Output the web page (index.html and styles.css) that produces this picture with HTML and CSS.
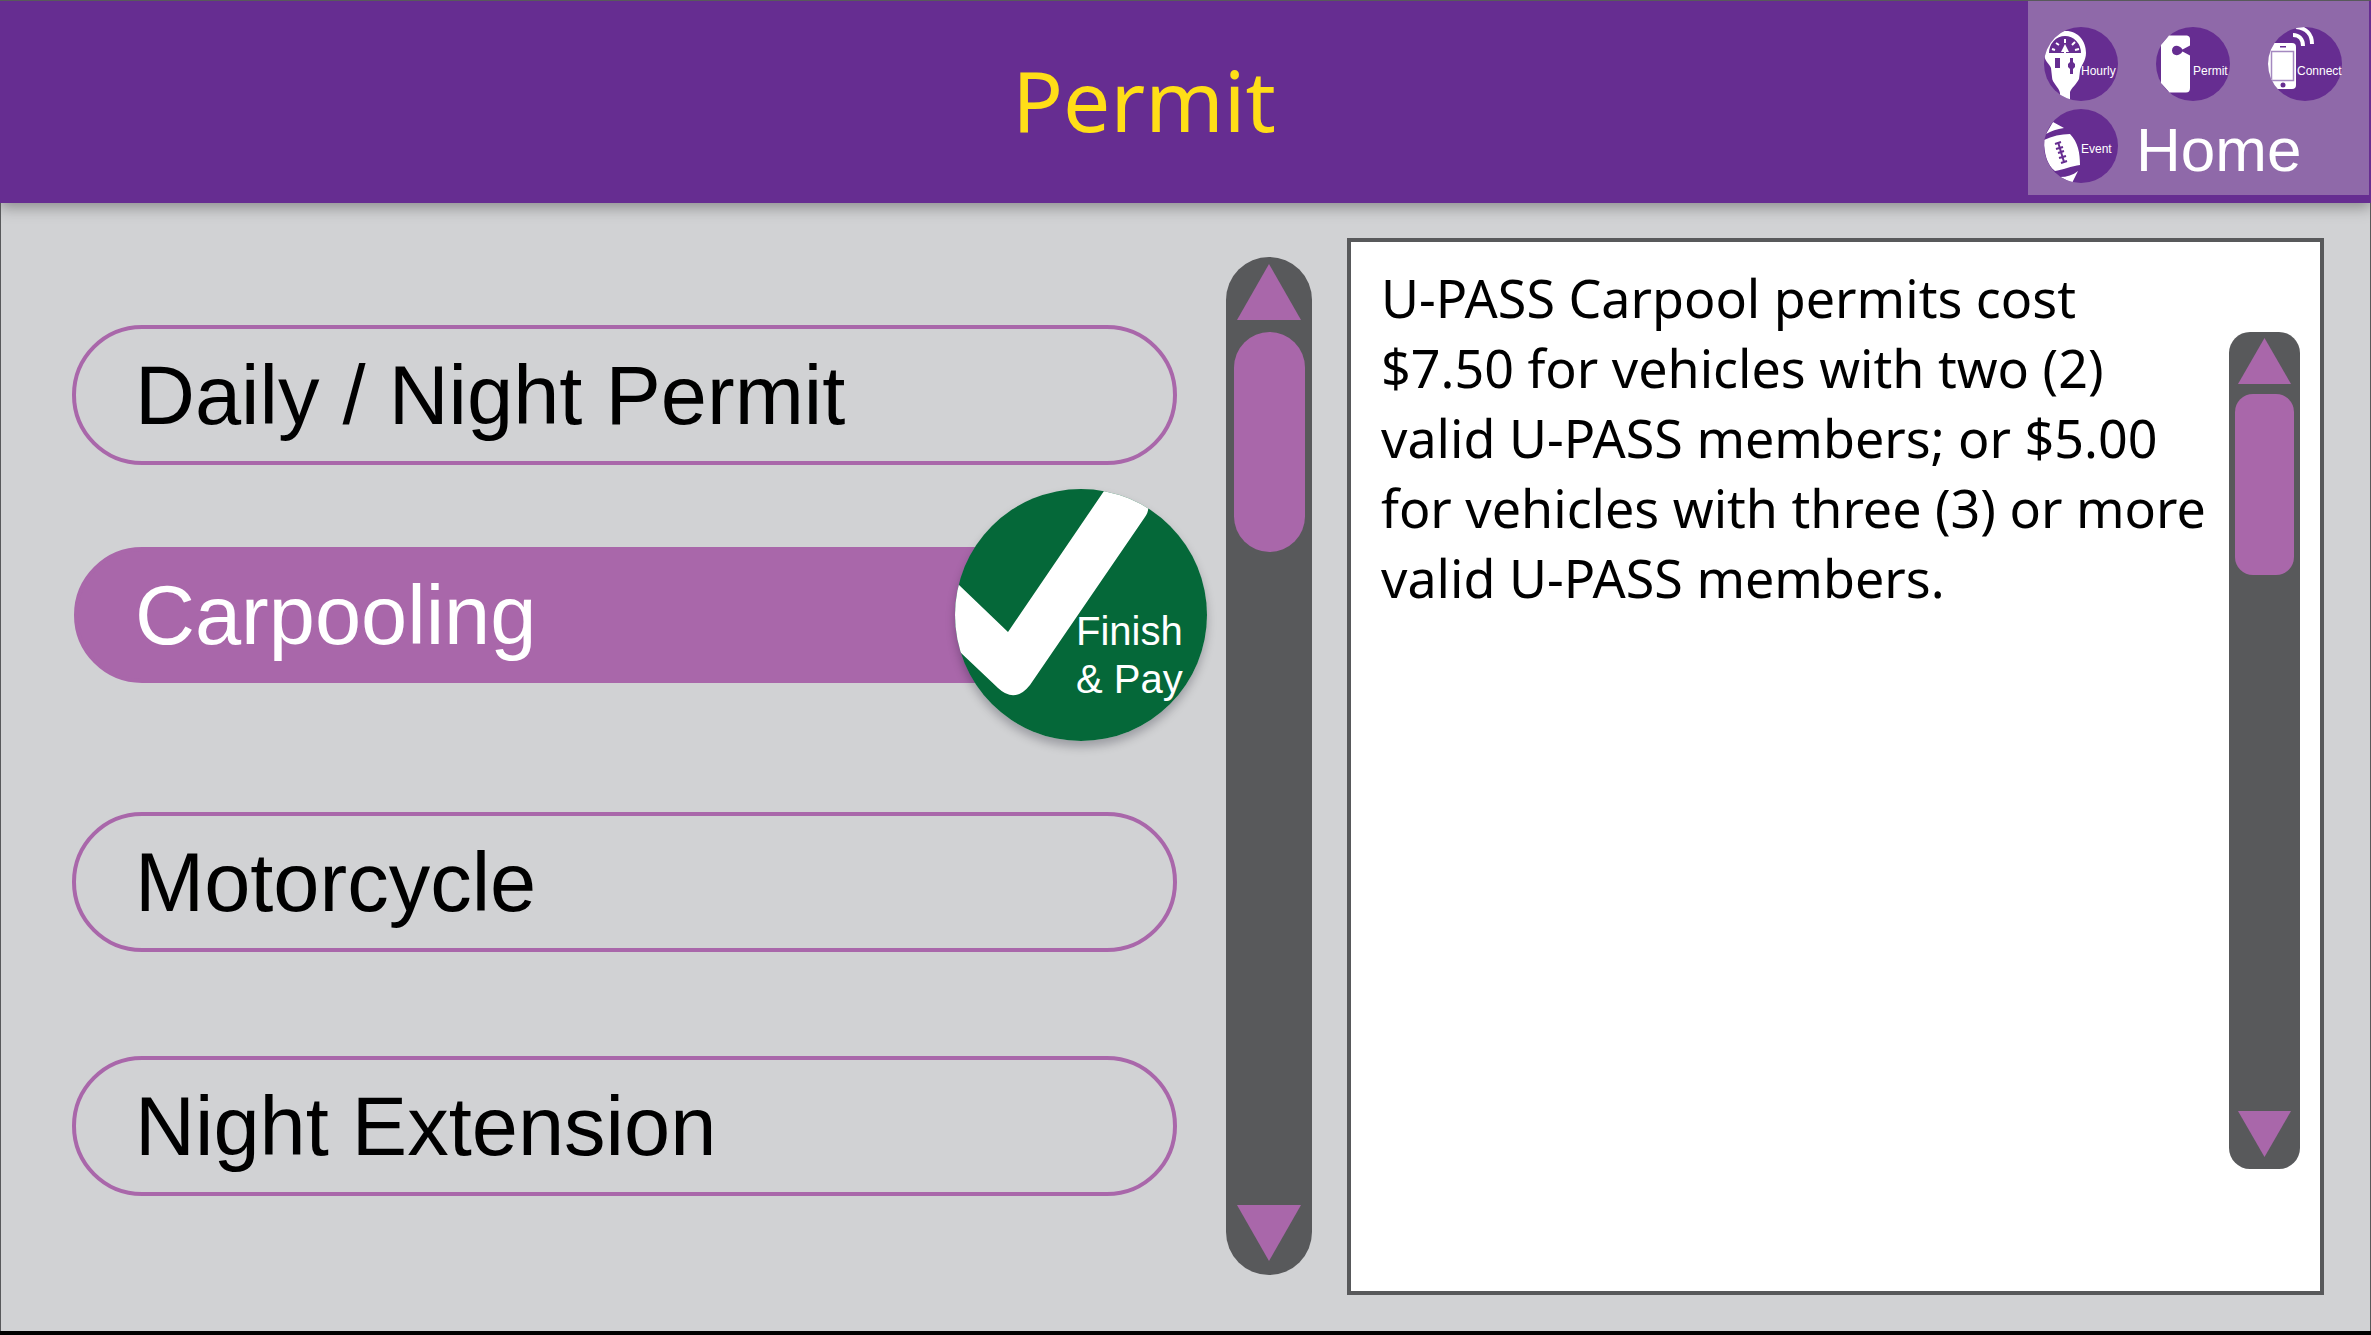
FILE: index.html
```
<!DOCTYPE html>
<html lang="en">
<head>
<meta charset="utf-8">
<title>Permit</title>
<link rel="stylesheet" href="styles.css">
</head>
<body>
<header class="topbar">
  <h1 class="title">Permit</h1>
  <nav class="home">
    <a class="chip" href="#hourly">
      <svg class="chip-art" viewBox="0 0 74 74" aria-hidden="true">
        <defs><clipPath id="disc"><circle cx="37" cy="37" r="37"/></clipPath></defs>
        <circle cx="37" cy="37" r="37" fill="#662d91"/>
        <g clip-path="url(#disc)">
          <path fill="#fff" d="M22 4C34 4 42 14 42 26C42 34 37 38 36 44L35 52C32 58 28 60 26 65V74H16V66C15 60 8 56 8 50L7 41C5 36 0 34 0 26C1 14 10 4 22 4Z"/>
          <path fill="#662d91" d="M5 26A16 17 0 0 1 37 26ZM11 31H16V41H11ZM26 31H29V35L31 37V40L29 42V47H26V42L24 40V37L26 35Z"/>
          <path stroke="#fff" stroke-width="2" fill="none" d="M8 22L11 23M12 16L15 18M21 12V16M31 15L28 18M35 22L31 23M21 26V21"/>
          <path fill="#fff" d="M21 17L25 25H17Z"/>
        </g>
      </svg>
      <span class="chip-label">Hourly</span>
    </a>
    <a class="chip" href="#permit">
      <svg class="chip-art" viewBox="0 0 74 74" aria-hidden="true">
        <circle cx="37" cy="37" r="37" fill="#662d91"/>
        <path fill="#fff" d="M13 8.500H31Q34 9 34 12V18.500L26.500 22.500C23 17 16 18 16 23.500C16 29 23 30 26.500 24.500L34 28.500V61Q34 65.500 30 65.500H13.500L5 56V18Z"/>
      </svg>
      <span class="chip-label">Permit</span>
    </a>
    <a class="chip chip-wide" href="#connect">
      <svg class="chip-art" viewBox="0 0 74 74" aria-hidden="true">
        <circle cx="37" cy="37" r="37" fill="#662d91"/>
        <g clip-path="url(#disc)">
          <rect x="0" y="16" width="28" height="46" rx="4" fill="#fff"/>
          <rect x="3.500" y="24.500" width="22" height="29" fill="#fff" stroke="#a489c0" stroke-width="1.500"/>
          <rect x="12" y="19" width="6" height="1.500" fill="#662d91"/>
          <circle cx="15" cy="58" r="2.500" fill="#662d91"/>
          <path fill="none" stroke="#fff" stroke-width="4" d="M25 8C31 8 35 12 35 19M28 0C38 1 44 7 44 17"/>
        </g>
      </svg>
      <span class="chip-label">Connect</span>
    </a>
    <a class="chip chip-event" href="#event">
      <svg class="chip-art" viewBox="0 0 74 74" aria-hidden="true">
        <circle cx="37" cy="37" r="37" fill="#662d91"/>
        <g clip-path="url(#disc)">
          <path fill="#fff" d="M9 13L20 19C13 20 7 22 2 25ZM0 31C8 27 17 25 26 25C34 33 36 44 36 56C28 57 18 61 11 62C3 56 0 44 0 31ZM16 68C23 68 29 66 34 62L28 74Z"/>
          <path stroke="#662d91" stroke-width="2" fill="none" d="M14 33L20 53M11 35L17 33M12 40L19 38M14 44L20 42M15 49L22 47M17 54L23 52"/>
        </g>
      </svg>
      <span class="chip-label">Event</span>
    </a>
    <a class="home-label" href="#home">Home</a>
  </nav>
</header>
<main class="content">
  <ul class="options">
    <li><button class="option" type="button">Daily / Night Permit</button></li>
    <li class="chosen">
      <button class="option option-on" type="button">Carpooling</button>
      <button class="pay" type="button">
        <svg class="pay-art" viewBox="0 0 252 252" aria-hidden="true">
          <defs><clipPath id="pay-disc"><circle cx="126" cy="126" r="126"/></clipPath></defs>
          <circle cx="126" cy="126" r="126" fill="#056839"/>
          <path clip-path="url(#pay-disc)" fill="#fff" d="M-5 88L4 96L53 143L149 2L170 -10L193 18Q194 22 190 28L75 196Q60 215 43 199L5 163L-5 154Z"/>
        </svg>
        <span class="pay-label">Finish<br>&amp; Pay</span>
      </button>
    </li>
    <li><button class="option" type="button">Motorcycle</button></li>
    <li><button class="option" type="button">Night Extension</button></li>
  </ul>
  <div class="scroller">
    <button class="arrow arrow-up" type="button" aria-label="Scroll list up"></button>
    <div class="thumb"></div>
    <button class="arrow arrow-down" type="button" aria-label="Scroll list down"></button>
  </div>
  <section class="panel">
    <p class="details">U-PASS Carpool permits cost<br>$7.50 for vehicles with two (2)<br>valid U-PASS members; or $5.00<br>for vehicles with three (3) or more<br>valid U-PASS members.</p>
    <div class="scroller scroller-small">
      <button class="arrow arrow-up" type="button" aria-label="Scroll details up"></button>
      <div class="thumb"></div>
      <button class="arrow arrow-down" type="button" aria-label="Scroll details down"></button>
    </div>
  </section>
</main>
</body>
</html>
```
FILE: styles.css
```
* {
  box-sizing: border-box;
}

body {
  margin: 0;
  min-height: 100vh;
  display: flex;
  flex-direction: column;
  background: #d1d2d4;
  border-bottom: 4px solid #000;
  font-family: "Liberation Sans", Arial, sans-serif;
  color: #000;
}

button {
  font: inherit;
  color: inherit;
  margin: 0;
  padding: 0;
  border: 0;
  background: none;
}

a {
  color: #fff;
  text-decoration: none;
}

.topbar {
  display: grid;
  grid-template-columns: 1fr 341px;
  height: 203px;
  padding-right: 2px;
  background: #662d91;
  border-top: 1px solid #58595b;
  box-shadow: 0 4px 14px rgba(0, 0, 0, 0.35);
}

.title {
  margin: 0;
  padding-left: 260px;
  font: 400 84px/198px "Noto Sans", sans-serif;
  text-align: center;
  color: #ffde17;
}

.home {
  display: grid;
  grid-template-columns: 74px 74px 74px;
  grid-template-rows: 74px 74px;
  gap: 8px 38px;
  height: 194px;
  padding: 26px 0 0 16px;
  background: #8f69a9;
}

.chip {
  position: relative;
}

.chip-art {
  display: block;
  width: 74px;
  height: 74px;
}

.chip-label {
  position: absolute;
  left: 37px;
  top: 36px;
  font-size: 12px;
  line-height: 16px;
}

.chip-wide .chip-label {
  left: 29px;
}

.chip-event .chip-label {
  top: 32px;
}

.home-label {
  grid-column: 2 / 4;
  margin-left: -20px;
  font-size: 62px;
  line-height: 82px;
}

.content {
  flex: 1;
  display: grid;
  grid-template-columns: minmax(0, 1154fr) 86px minmax(0, 1012fr);
  align-items: start;
  padding: 35px 46px 36px 71px;
  border: solid #58595b;
  border-width: 0 1px;
}

.options {
  margin: 87px 49px 0 0;
  padding: 0;
  list-style: none;
  font-size: 83px;
}

.options li + li {
  margin-top: 104px;
}

.options .chosen.chosen {
  position: relative;
  margin: 82px 0 129px 2px;
}

.option {
  display: block;
  width: 100%;
  height: 140px;
  padding: 2px 59px 0;
  border: 4px solid #a967aa;
  border-radius: 70px;
  text-align: left;
}

.option-on {
  height: 136px;
  padding: 2px 57px 0;
  background: #a967aa;
  color: #fff;
}

.pay {
  position: absolute;
  right: -30px;
  top: -58px;
  width: 252px;
  height: 252px;
  border-radius: 50%;
  box-shadow: 0 6px 10px rgba(0, 0, 20, 0.25);
  color: #fff;
}

.pay-art {
  display: block;
}

.pay-label {
  position: absolute;
  left: 121px;
  top: 118px;
  font-size: 40px;
  line-height: 48px;
  text-align: left;
  white-space: nowrap;
}

.scroller {
  display: flex;
  flex-direction: column;
  align-items: center;
  width: 86px;
  height: 1018px;
  margin-top: 19px;
  padding: 7px 0 14px;
  border-radius: 43px;
  background: #58595b;
}

.arrow {
  width: 64px;
  height: 56px;
  background: #a967aa;
}

.arrow-up {
  clip-path: polygon(50% 0, 100% 100%, 0 100%);
}

.arrow-down {
  margin-top: auto;
  clip-path: polygon(0 0, 100% 0, 50% 100%);
}

.thumb {
  width: 71px;
  height: 220px;
  margin-top: 12px;
  border-radius: 36px;
  background: #a967aa;
}

.panel {
  display: flex;
  justify-content: space-between;
  align-items: flex-start;
  height: 1057px;
  margin-left: 35px;
  padding: 21px 20px 0 30px;
  border: 4px solid #58595b;
  background: #fff;
}

.details {
  margin: 0;
  font: 400 52px/70px "Noto Sans", sans-serif;
  white-space: nowrap;
}

.scroller-small {
  flex: none;
  width: 71px;
  height: 837px;
  margin-top: 69px;
  padding: 6px 0 12px;
  border-radius: 21px;
}

.scroller-small .arrow {
  width: 53px;
  height: 46px;
}

.scroller-small .thumb {
  width: 59px;
  height: 181px;
  margin-top: 10px;
  border-radius: 18px;
}
```
